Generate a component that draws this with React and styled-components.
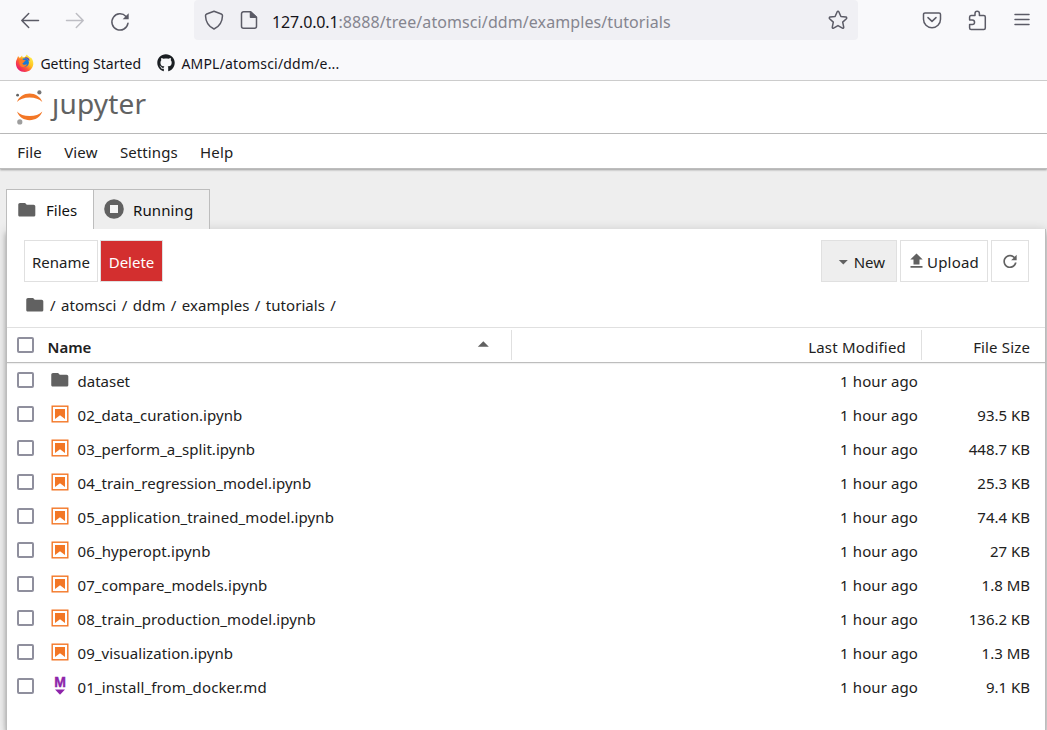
import React from 'react';
import styled, { createGlobalStyle } from 'styled-components';
import { FaGithub } from 'react-icons/fa6';

const GlobalStyle = createGlobalStyle`
  * { box-sizing: border-box; }
  html, body { margin: 0; padding: 0; }
  body {
    font-family: 'Noto Sans', 'Open Sans', sans-serif;
    font-size: 15px;
    color: #212121;
    background: #eee;
    overflow: hidden;
  }
`;

const Page = styled.div`
  width: 1047px;
  height: 730px;
  display: flex;
  flex-direction: column;
  overflow: hidden;
`;

const Label = styled.span`
  white-space: pre;
  line-height: 20px;
  letter-spacing: ${(p) => p.$ls || 0}px;
  word-spacing: ${(p) => p.$ws || 0}px;
  color: ${(p) => p.$color || 'inherit'};
  font-weight: ${(p) => (p.$bold ? 600 : 400)};
`;

const Icon = styled.svg`
  display: block;
  flex: none;
  overflow: visible;
`;

/* Browser chrome */
const Chrome = styled.header`
  height: 81px;
  flex: none;
  background: #f9f9fb;
  border-bottom: 1px solid #ccc;
`;

const NavRow = styled.div`
  display: flex;
  height: 40px;
`;

const NavButtons = styled.div`
  display: flex;
  align-items: center;
  gap: 25px;
  width: 194px;
  padding: 2px 0 0 20px;
`;

const UrlBar = styled.div`
  display: flex;
  align-items: center;
  width: 664px;
  padding: 0 10px;
  background: #f0f0f4;
  border-radius: 4px;
`;

const UrlIcons = styled.div`
  display: flex;
  gap: 15px;
  width: 68px;
`;

const UrlText = styled.div`
  flex: 1;
  font-size: 16px;
  padding-top: 3px;
`;

const NavActions = styled.div`
  display: flex;
  flex: 1;
  align-items: center;
  justify-content: flex-end;
  gap: 25px;
  padding-right: 15px;
`;

const Bookmarks = styled.div`
  display: flex;
  align-items: center;
  gap: 16px;
  height: 40px;
  padding: 6px 0 0 16px;
  font-size: 14px;
  color: #15141a;
`;

const Bookmark = styled.div`
  display: flex;
  align-items: center;
  gap: 6px;
  > span { margin: 2px 0 0 0.4px; }
`;

/* Application header */
const Brand = styled.div`
  display: flex;
  height: 53px;
  flex: none;
  padding: 8px 0 0 15px;
  background: #fff;
  border-bottom: 1px solid #bdbdbd;
`;

const Wordmark = styled.span`
  font-size: 28px;
  line-height: 28px;
  color: #616262;
  margin-left: 8px;
  letter-spacing: 0.2px;
`;

const MenuBar = styled.nav`
  position: relative;
  z-index: 1;
  display: flex;
  align-items: center;
  gap: 22.3px;
  height: 35px;
  flex: none;
  padding: 1px 0 0 17.3px;
  background: #fff;
  border-bottom: 1px solid #bdbdbd;
  box-shadow: 0 1px 2px rgba(0, 0, 0, 0.35);
`;

const Main = styled.main`
  display: flex;
  flex-direction: column;
  flex: 1;
  padding: 20px 1px 0 6px;
`;

const Tabs = styled.div`
  display: flex;
  height: 40px;
  position: relative;
  z-index: 1;
`;

const Tab = styled.div`
  display: flex;
  align-items: center;
  gap: 8px;
  width: ${(p) => p.$w}px;
  height: ${(p) => (p.$active ? '41px' : '40px')};
  padding: ${(p) => (p.$active ? '0 0 0 9px' : '1px 0 0 9px')};
  border: 1px solid #bdbdbd;
  border-bottom: 0;
  border-right-width: ${(p) => (p.$active ? 0 : 1)}px;
  background: ${(p) => (p.$active ? '#fff' : '#eee')};
  color: #111;
  > svg { margin-top: ${(p) => (p.$active ? -1 : -3)}px; }
`;

const Panel = styled.section`
  flex: 1;
  background: #fff;
  border-left: 1px solid #bdbdbd;
  border-right: 1px solid #bdbdbd;
  box-shadow: 0 3px 4px -1px rgba(0, 0, 0, 0.2), 0 5px 5px 0 rgba(0, 0, 0, 0.16), 0 1px 10px 0 rgba(0, 0, 0, 0.16);
`;

const Toolbar = styled.div`
  display: flex;
  padding: 11px 16px 0 17px;
  height: 53px;
`;

const Spacer = styled.div`
  flex: 1;
`;

const Button = styled.div`
  display: flex;
  align-items: center;
  justify-content: ${(p) => (p.$end ? 'flex-end' : 'center')};
  gap: ${(p) => p.$gap || 0}px;
  width: ${(p) => p.$w}px;
  height: 42px;
  margin-left: ${(p) => p.$ml || 0}px;
  padding: 1px ${(p) => (p.$end ? 11 : 0)}px 0 0;
  border: 1px solid #e0e0e0;
  background: ${(p) => p.$bg || '#fff'};
  color: ${(p) => p.$fg || '#212121'};
`;

const Crumbs = styled.div`
  display: flex;
  align-items: center;
  gap: 4px;
  height: 45px;
  padding: 0 0 0 17px;
  > svg { margin-top: 1px; }
`;

const HeaderRow = styled.div`
  display: flex;
  height: 36px;
  border-top: 1px solid #e0e0e0;
  border-bottom: 1px solid #bdbdbd;
  box-shadow: 0 1px 1px rgba(0, 0, 0, 0.06);
`;

const HeaderCell = styled.div`
  display: flex;
  align-items: center;
  justify-content: ${(p) => (p.$right ? 'flex-end' : 'flex-start')};
  width: ${(p) => p.$w}px;
  flex: none;
  height: 30px;
  margin-top: 2px;
  padding: ${(p) => p.$pad};
  border-right: ${(p) => (p.$line ? '1px solid #e0e0e0' : '0')};
  > svg { margin-top: -5px; }
`;

const HeaderName = styled.div`
  flex: 1;
  padding-left: 13.5px;
`;

const FileRow = styled.div`
  display: flex;
  align-items: center;
  height: 34px;
  padding: 2px 15px 0 10px;
`;

const Checkbox = styled.span`
  width: 17px;
  height: 16px;
  flex: none;
  margin-top: ${(p) => (p.$header ? -4 : -2)}px;
  border: 2px solid #8f8f9d;
  border-radius: 2px;
  background: #fff;
`;

const FileIcon = styled.span`
  width: 22px;
  margin: -2px 6.5px 0 15px;
`;

const FileName = styled.div`
  flex: 1;
`;

const FileSize = styled.div`
  width: 112px;
  text-align: right;
`;

const Folder = () => (
  <Icon width="22" height="22" viewBox="0 0 24 24" fill="#616161">
    <path d="M10 4H4c-1.1 0-1.99.9-1.99 2L2 18c0 1.1.9 2 2 2h16c1.1 0 2-.9 2-2V8c0-1.1-.9-2-2-2h-8l-2-2z" transform="translate(.6 .6) scale(.93)" />
  </Icon>
);

const Notebook = () => (
  <Icon width="22" height="22" viewBox="0 0 22 22">
    <rect x="3.2" y="3.2" width="15.6" height="15.6" fill="none" stroke="#f37726" strokeWidth="1.4" />
    <path d="M6 6h10v10l-5-3.8L6 16z" fill="#f37726" />
  </Icon>
);

const Markdown = () => (
  <Icon width="22" height="22" viewBox="0 0 22 22" fill="#8e24aa">
    <text x="11" y="12.300" fontSize="14" fontWeight="700" fontFamily="'Liberation Sans', sans-serif" textAnchor="middle" stroke="#8e24aa" strokeWidth=".4">M</text>
    <path d="M6 14.500h10l-5 5.300z" />
  </Icon>
);

const Caret = ({ up }) => (
  <Icon width="12" height="8" viewBox="0 0 12 8" fill="#616161">
    <path d={up ? 'M.8 6.8h11L6.300 1.200z' : 'M.8 2h9L5.300 6.500z'} />
  </Icon>
);

const Firefox = () => (
  <Icon width="18" height="18" viewBox="0.400 0 18 18">
    <defs>
      <linearGradient id="ffBody" x1=".9" y1=".1" x2=".15" y2=".9">
        <stop offset="0" stopColor="#fff44f" />
        <stop offset=".4" stopColor="#ffc01f" />
        <stop offset=".65" stopColor="#ff5a36" />
        <stop offset="1" stopColor="#e8156f" />
      </linearGradient>
    </defs>
    <path d="M1.3 5.3 2.5 2l1.2 1.7L5 3.2 6.5 1.5l.4 1.8L9.3 3 11.3.4c.6 1.5 2.5 2.2 3.4 3.4l.6-.3c1.8 2 2.7 4.500 2.400 6.800C17.200 14.700 13.700 18 9.200 18 4.300 18 .4 14.500.3 9.500c0-1.700.4-3.200 1-4.200z" fill="url(#ffBody)" />
    <circle cx="9" cy="8.500" r="4.300" fill="#1779d6" />
    <path d="M4 5.200c1.500-.7 3-.4 4 .7l2.100.3c.2.800-1.700 1.100-1.900 1.900 0 1-.8 1.200-1.500 1.500.7 1.400 3 1.600 5 .5-1 2.400-3 3.400-5 2.900C4.200 12.400 2.900 8.500 4 5.200z" fill="#ff7d25" />
    <path d="M9.300 4c2-.6 3.600.7 4.200 2.600" fill="none" stroke="#5a3fc0" strokeWidth="1.300" />
  </Icon>
);

const JupyterMark = () => (
  <Icon width="29" height="36" viewBox="0 0 29 36">
    <path d="M2 13C4 7.500 9 4.500 14.600 4.500s10.700 3 12.700 8.500C24.500 10 20 8.500 14.600 8.500S4.800 10 2 13z" fill="#f37726" />
    <path d="M2 22.500C4 28 9 31.200 14.600 31.200s10.700-3.200 12.700-8.700c-2.800 3-7.300 4.500-12.700 4.500S4.800 25.500 2 22.500z" fill="#f37726" />
    <circle cx="24.400" cy="3.400" r="2.100" fill="#767677" />
    <circle cx="2.600" cy="6.200" r="1.400" fill="#616262" />
    <circle cx="4.800" cy="32.900" r="2.600" fill="#9e9e9e" />
  </Icon>
);

const line = { fill: 'none', stroke: '#5b5b66', strokeWidth: 1.5, strokeLinecap: 'round', strokeLinejoin: 'round' };

const files = [
  ['folder', 'dataset', '', 0],
  ['nb', '02_data_curation.ipynb', '93.5 KB', 0.07],
  ['nb', '03_perform_a_split.ipynb', '448.7 KB', 0.05],
  ['nb', '04_train_regression_model.ipynb', '25.3 KB', 0.05],
  ['nb', '05_application_trained_model.ipynb', '74.4 KB', 0.1],
  ['nb', '06_hyperopt.ipynb', '27 KB', 0.12],
  ['nb', '07_compare_models.ipynb', '1.8 MB', 0.1],
  ['nb', '08_train_production_model.ipynb', '136.2 KB', 0.1],
  ['nb', '09_visualization.ipynb', '1.3 MB', 0.07],
  ['md', '01_install_from_docker.md', '9.1 KB', 0.12],
];

const icons = { folder: <Folder />, nb: <Notebook />, md: <Markdown /> };

export default function App() {
  return (
    <Page>
      <GlobalStyle />
      <Chrome>
        <NavRow>
          <NavButtons>
            <Icon width="20" height="20" viewBox="0 0 20 20" {...line}><path d="M18.500 9.500H1.800M8.700 2.500 1.800 9.500l6.900 7" /></Icon>
            <Icon width="20" height="20" viewBox="0 0 20 20" {...line} stroke="#bebec4"><path d="M1.500 9.500h16.700M11.300 2.500l6.900 7-6.900 7" /></Icon>
            <Icon width="20" height="20" viewBox="0 0 20 20" {...line}><path d="M18 12.200a8.100 8.100 0 1 1-2-6.700l1 1" /><path d="M18.700 2.200v6h-6z" fill="#5b5b66" stroke="none" /></Icon>
          </NavButtons>
          <UrlBar>
            <UrlIcons>
              <Icon width="20" height="20" viewBox="0 0 20 20" {...line}><path d="M10 1.200 17.300 4c.8.300 1.200.8 1.200 1.700-.2 5.800-2.800 10.700-8.500 13.300C4.300 16.400 1.700 11.500 1.500 5.700c0-.9.400-1.400 1.200-1.700z" /></Icon>
              <Icon width="20" height="20" viewBox="0 0 20 20" {...line}><path d="M11.500 1.800H4.500a2 2 0 0 0-2 2v12.400a2 2 0 0 0 2 2h11a2 2 0 0 0 2-2V7.200z" /><path d="M11.500 1.800v5.400h5.800z" fill="#5b5b66" /></Icon>
            </UrlIcons>
            <UrlText>
              <Label $ls={-0.15} $color="#15141a">127.0.0.1</Label>
              <Label $ls={0.09} $color="#85858f">:8888/tree/atomsci/ddm/examples/tutorials</Label>
            </UrlText>
            <Icon width="20" height="20" viewBox="0 0 20 20" {...line}><path d="M9.200 1.800c.3-.7 1.300-.7 1.600 0l2.100 4.700 5 .6c.8.100 1.100 1 .5 1.600l-3.700 3.400 1 5c.2.800-.6 1.400-1.300 1L10 15.600l-4.400 2.500c-.7.400-1.500-.2-1.300-1l1-5L1.600 8.700c-.6-.6-.3-1.500.5-1.600l5-.6z" /></Icon>
          </UrlBar>
          <NavActions>
            <Icon width="20" height="20" viewBox="0 0 20 20" {...line}><path d="M3 2.900h14a1.500 1.500 0 0 1 1.500 1.500v4.900a8.500 8.500 0 0 1-17 0V4.400A1.500 1.500 0 0 1 3 2.900zM6 7.600l4 3.800 4-3.800" /></Icon>
            <Icon width="20" height="20" viewBox="0 0 20 20" {...line}><path d="M4 5.500h4V3.400a2.200 2.200 0 0 1 4.400 0v2.100h4.400A1.500 1.500 0 0 1 18.300 7v11a1.500 1.500 0 0 1-1.500 1.500H4.100a1.500 1.500 0 0 1-1.500-1.500v-3.500h2.700a2.200 2.200 0 0 0 0-4.500H2.600V7A1.500 1.500 0 0 1 4 5.500z" /></Icon>
            <Icon width="20" height="20" viewBox="0 0 20 20" {...line}><path d="M3 4.500h14M3 9.500h14M3 14.500h14" /></Icon>
          </NavActions>
        </NavRow>
        <Bookmarks>
          <Bookmark><Firefox /><Label>Getting Started</Label></Bookmark>
          <Bookmark><FaGithub size={18} color="#1b1f23" /><Label $ls={0.19}>AMPL/atomsci/ddm/e...</Label></Bookmark>
        </Bookmarks>
      </Chrome>
      <Brand>
        <JupyterMark />
        <Wordmark aria-label="jupyter">ȷupyter</Wordmark>
      </Brand>
      <MenuBar>
        <Label $ls={0.15}>File</Label>
        <Label $ls={0.15}>View</Label>
        <Label $ls={0.1}>Settings</Label>
        <Label $ls={0.15}>Help</Label>
      </MenuBar>
      <Main>
        <Tabs>
          <Tab $active $w={87}><Folder /><Label>Files</Label></Tab>
          <Tab $w={117}>
            <Icon width="22" height="22" viewBox="0 0 22 22">
              <circle cx="11" cy="11" r="9.800" fill="#616161" />
              <rect x="7" y="7" width="8" height="8" fill="#f4f4f4" />
            </Icon>
            <Label $ls={0.12}>Running</Label>
          </Tab>
        </Tabs>
        <Panel>
          <Toolbar>
            <Button $w={74}><Label>Rename</Label></Button>
            <Button $w={63} $ml={2} $bg="#d32f2f" $fg="#fff"><Label>Delete</Label></Button>
            <Spacer />
            <Button $w={76} $bg="#eee" $end $gap={4}><Caret /><Label>New</Label></Button>
            <Button $w={88} $ml={3} $gap={4}>
              <Icon width="14" height="16" viewBox="-0.500 0.500 14 16" fill="#616161"><path d="M4 11V6H.800L7 0l6.200 6H10v5zM1 12.500h12v1.700H1z" /></Icon>
              <Label $ls={0.2}>Upload</Label>
            </Button>
            <Button $w={38} $ml={3}>
              <Icon width="20" height="20" viewBox="0 0.500 18 18" fill="#616161"><path d="M9 13.500c-2.490 0-4.500-2.010-4.500-4.500S6.510 4.500 9 4.500c1.240 0 2.360.520 3.170 1.330L10 8h5V3l-1.760 1.760C12.150 3.680 10.660 3 9 3 5.690 3 3.010 5.690 3.010 9S5.690 15 9 15c2.970 0 5.430-2.160 5.900-5h-1.520c-.46 2-2.240 3.500-4.380 3.500z" /></Icon>
            </Button>
          </Toolbar>
          <Crumbs>
            <Folder />
            <Label $ls={0.05} $ws={1.4}>/ atomsci / ddm / examples / tutorials /</Label>
          </Crumbs>
          <HeaderRow>
            <HeaderCell $w={505} $line $pad="3px 22px 0 10px">
              <Checkbox $header />
              <HeaderName><Label $bold>Name</Label></HeaderName>
              <Caret up />
            </HeaderCell>
            <HeaderCell $w={410} $line $right $pad="3px 15px 0 0"><Label $ls={0.2}>Last Modified</Label></HeaderCell>
            <HeaderCell $w={123} $right $pad="3px 15px 0 0"><Label $ls={0.15}>File Size</Label></HeaderCell>
          </HeaderRow>
          {files.map(([kind, name, size, ls]) => (
            <FileRow key={name}>
              <Checkbox />
              <FileIcon>{icons[kind]}</FileIcon>
              <FileName><Label $ls={ls}>{name}</Label></FileName>
              <Label $ls={0.1}>1 hour ago</Label>
              <FileSize><Label>{size}</Label></FileSize>
            </FileRow>
          ))}
        </Panel>
      </Main>
    </Page>
  );
}
